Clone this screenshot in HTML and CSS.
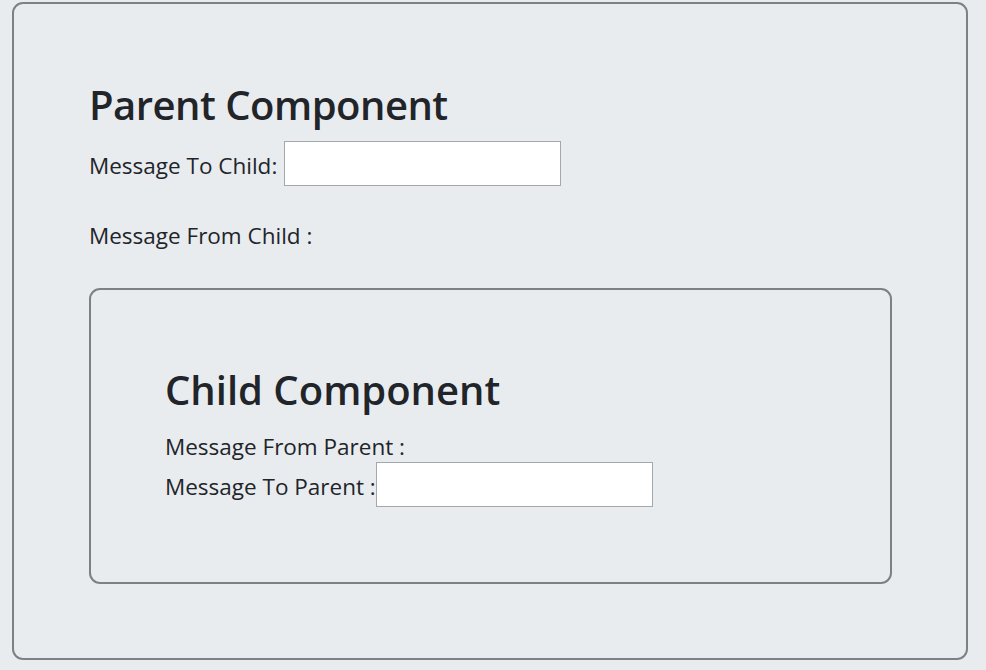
FILE: index.html
```html
<!DOCTYPE html>
<html>
<head>
<meta charset="utf-8">
<link rel="stylesheet" href="styles.css">
</head>
<body>
<div class="parent">
  <h2 class="title">Parent Component</h2>
  <div class="row">
    <label class="label">Message To Child:</label>
    <input class="field" type="text">
  </div>
  <p class="line from-child">Message From Child :</p>
  <div class="child">
    <h2 class="title">Child Component</h2>
    <p class="line from-parent">Message From Parent :</p>
    <div class="row">
      <label class="label">Message To Parent :</label>
      <input class="field" type="text">
    </div>
  </div>
</div>
</body>
</html>
```
FILE: styles.css
```css
html, body {
  margin: 0;
  padding: 0;
  background: #e9ecef;
}
body {
  font-family: "Open Sans", "Noto Sans", sans-serif;
  color: #212529;
  font-size: 22.5px;
  line-height: 30px;
  padding: 2px 18px 10px 12px;
}
.parent {
  border: 2px solid #7d8185;
  border-radius: 11px;
  padding: 77px 74px 74px 75px;
}
.title {
  font-size: 40px;
  font-weight: 600;
  line-height: 48px;
  margin: 0 0 12px 0;
  letter-spacing: -0.5px;
}
.row {
  display: flex;
  align-items: center;
}
.label {
  padding-top: 4px;
}
.field {
  width: 277px;
  height: 45px;
  box-sizing: border-box;
  border: 1px solid #a4a8ac;
  background: #fff;
  margin: 0 0 0 7px;
  padding: 0;
}
.line {
  margin: 0;
}
.from-child {
  margin: 35px 0 37px 0;
}
.child {
  border: 2px solid #7d8185;
  border-radius: 11px;
  padding: 76px 74px 75px 74px;
}
.child .title {
  margin-bottom: 18px;
  letter-spacing: 0;
}
.child .row .field {
  margin-left: 0;
}
```
